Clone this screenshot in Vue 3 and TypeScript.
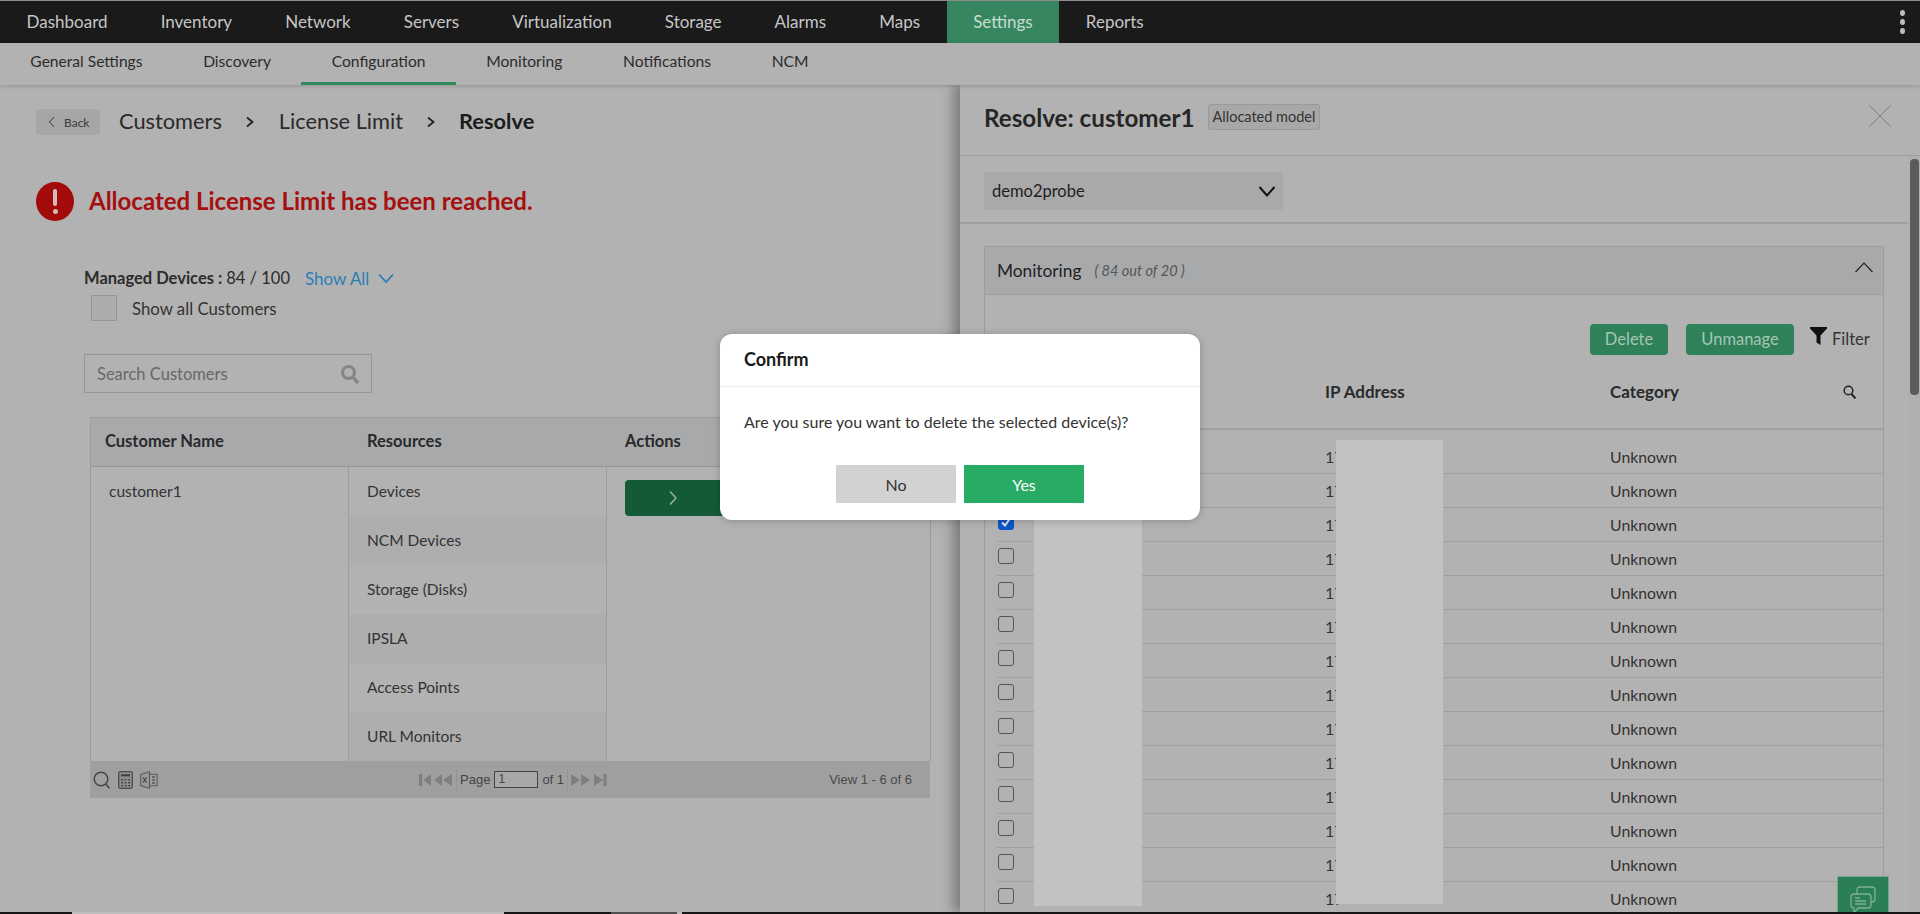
<script setup lang="ts">
const mainNav: string[] = ['Dashboard','Inventory','Network','Servers','Virtualization','Storage','Alarms','Maps','Settings','Reports']
const subNav: string[] = ['General Settings','Discovery','Configuration','Monitoring','Notifications','NCM']
const resources: string[] = ['Devices','NCM Devices','Storage (Disks)','IPSLA','Access Points','URL Monitors']
const rows: number[] = Array.from({ length: 14 }, (_, i) => i)
</script>

<template>
  <div class="page">
    <div class="top-strip"></div>
    <nav class="main-nav">
      <a v-for="n in mainNav" :key="n" class="main-item" :class="{ on: n === 'Settings' }">{{ n }}</a>
      <span class="kebab"><i></i><i></i><i></i></span>
    </nav>
    <nav class="sub-nav">
      <a v-for="n in subNav" :key="n" class="sub-item" :class="{ on: n === 'Configuration' }">{{ n }}</a>
    </nav>
    <div class="body">
      <section class="left">
        <div class="crumbs">
          <button class="back">
            <svg width="7" height="12" viewBox="0 0 7 12"><path d="M6 1 1.5 6 6 11" fill="none" stroke="#3a3a3a" stroke-width="1"/></svg>
            <span>Back</span>
          </button>
          <span class="crumb">Customers</span>
          <svg class="sep" width="10" height="12" viewBox="0 0 10 12"><path d="M2 1.5 7.5 6 2 10.5" fill="none" stroke="#222" stroke-width="1.8"/></svg>
          <span class="crumb">License Limit</span>
          <svg class="sep" width="10" height="12" viewBox="0 0 10 12"><path d="M2 1.5 7.5 6 2 10.5" fill="none" stroke="#222" stroke-width="1.8"/></svg>
          <span class="crumb current">Resolve</span>
        </div>
        <div class="alert">
          <span class="alert-icon"><i></i><b></b></span>
          <span class="alert-text">Allocated License Limit has been reached.</span>
        </div>
        <div class="managed">
          <span class="managed-label">Managed Devices :</span>
          <span class="managed-val">84 / 100</span>
          <a class="show-all">Show All</a>
          <svg width="16" height="11" viewBox="0 0 16 11"><path d="M1 1.5 8 9 15 1.5" fill="none" stroke="#2b7eb5" stroke-width="1.8"/></svg>
        </div>
        <label class="show-customers"><span class="big-check"></span><span>Show all Customers</span></label>
        <div class="search">
          <span>Search Customers</span>
          <svg width="20" height="20" viewBox="0 0 20 20"><circle cx="8.5" cy="8.5" r="6" fill="none" stroke="#858585" stroke-width="3"/><path d="M13 13l5 6" stroke="#858585" stroke-width="3.4"/></svg>
        </div>
        <div class="grid">
          <div class="grid-head">
            <div class="gh c1">Customer Name</div>
            <div class="gh c2">Resources</div>
            <div class="gh c3">Actions</div>
          </div>
          <div class="grid-body">
            <div class="c1 cust">customer1</div>
            <div class="c2 res-col">
              <div v-for="(r, i) in resources" :key="r" class="res" :class="{ alt: i % 2 === 1 }">{{ r }}</div>
            </div>
            <div class="c3 act-col">
              <button class="go">
                <svg width="10" height="16" viewBox="0 0 10 16"><path d="M2 1.5 8 8 2 14.5" fill="none" stroke="#9fb3a8" stroke-width="1.4"/></svg>
              </button>
            </div>
          </div>
        </div>
        <div class="pager">
          <div class="pager-tools">
            <svg width="18" height="18" viewBox="0 0 18 18"><circle cx="8" cy="8" r="6.8" fill="none" stroke="#474747" stroke-width="1.5"/><path d="M12.8 13l3.6 4.2" stroke="#474747" stroke-width="1.7"/></svg>
            <svg width="15" height="18" viewBox="0 0 15 18"><rect x=".7" y=".7" width="13.6" height="16.6" rx="1.5" fill="#8d8d8d" stroke="#4d4d4d" stroke-width="1.3"/><rect x="3" y="3.3" width="9" height="2" fill="#3f3f3f"/><path d="M3 8h2v1.6H3zM6.5 8h2v1.6h-2zM10 8h2v1.6h-2zM3 11h2v1.6H3zM6.5 11h2v1.6h-2zM10 11h2v1.6h-2zM3 14h2v1.6H3zM6.5 14h2v1.6h-2zM10 14h2v1.6h-2z" fill="#4a4a4a"/></svg>
            <svg width="18" height="18" viewBox="0 0 18 18"><path d="M.7 3.5 9.5.8v16.4L.7 14.5z" fill="#9a9a9a" stroke="#5a5a5a" stroke-width="1.1"/><path d="M9.5 3.3h7.6v11.4H9.5" fill="none" stroke="#5a5a5a" stroke-width="1.1"/><path d="M3 6.4l3.6 5.2M6.6 6.4 3 11.6" stroke="#4a4a4a" stroke-width="1.1"/><path d="M12 6h3M12 9h3M12 12h3" stroke="#5a5a5a" stroke-width="1.4"/></svg>
          </div>
          <div class="pager-center">
            <svg width="34" height="14" viewBox="0 0 34 14"><path d="M0 1h3v12H0zM4 7l8-6v12zM23 1v12l-8-6zM33 1v12l-9-6z" fill="#7f7f7f"/></svg>
            <span class="v-sep"></span>
            <span>Page</span>
            <span class="page-input">1</span>
            <span>of 1</span>
            <span class="v-sep"></span>
            <svg width="36" height="14" viewBox="0 0 36 14"><path d="M0 1v12l9-6zM10 1v12l9-6zM23 1v12l9-6zM32.500 1h3v12h-3z" fill="#7f7f7f"/></svg>
          </div>
          <div class="pager-view">View 1 - 6 of 6</div>
        </div>
      </section>

      <aside class="panel">
        <header class="panel-head">
          <h2>Resolve: customer1</h2>
          <span class="badge">Allocated model</span>
          <svg class="close" width="24" height="24" viewBox="0 0 24 24"><path d="M1 1l22 22M23 1 1 23" stroke="#7d7d7d" stroke-width="1"/></svg>
        </header>
        <div class="scroll-track"><div class="scroll-thumb"></div></div>
        <div class="probe-bar">
          <div class="probe">
            <span>demo2probe</span>
            <svg width="18" height="11" viewBox="0 0 18 11"><path d="M1.500 1 9 9.500 16.500 1" fill="none" stroke="#111" stroke-width="2"/></svg>
          </div>
        </div>
        <div class="accordion">
          <div class="acc-head">
            <span class="acc-title">Monitoring</span>
            <em>( 84 out of 20 )</em>
            <svg width="18" height="11" viewBox="0 0 18 11"><path d="M0.500 10 9 1l8.500 9" fill="none" stroke="#222" stroke-width="1.100"/></svg>
          </div>
          <div class="acc-body">
            <div class="toolbar">
              <button class="green del">Delete</button>
              <button class="green unm">Unmanage</button>
              <svg class="funnel" width="17" height="18" viewBox="0 0 17 18"><path d="M0 0h17v1.500L10.500 8.500V18L6.500 15.500V8.500L0 1.500z" fill="#111"/></svg>
              <span class="filter">Filter</span>
            </div>
            <div class="thead">
              <span class="th-ip">IP Address</span>
              <span class="th-cat">Category</span>
              <svg width="14" height="14" viewBox="0 0 14 14"><circle cx="5.500" cy="5.500" r="4.300" fill="none" stroke="#222" stroke-width="1.500"/><path d="M8.500 9l4 4.500" stroke="#222" stroke-width="1.900"/></svg>
            </div>
            <div v-for="i in rows" :key="i" class="tr" :class="{ first: i === 0 }">
              <span class="cb" :class="{ checked: i === 2 }">
                <svg v-if="i === 2" width="12" height="12" viewBox="0 0 12 12"><path d="M2 6.500 5 9.500 10 2.500" fill="none" stroke="#dfe6f2" stroke-width="2"/></svg>
              </span>
              <span class="td-ip">17</span>
              <span class="td-cat">Unknown</span>
            </div>
          </div>
        </div>
        <div class="mask mask-a"></div>
        <div class="mask mask-b"></div>
        <div class="chat">
          <svg width="28" height="32" viewBox="0 0 28 32"><path d="M8 14V5q0-3 3-3h12q3 0 3 3v9q0 3-3 3h-3" fill="none" stroke="#7fb096" stroke-width="1.300"/><path d="M5 9h14q3 0 3 3v8q0 3-3 3H9l-4 5v-5q-3 0-3-3v-8q0-3 3-3z" fill="#2a7f55" stroke="#7fb096" stroke-width="1.300"/><path d="M6 13h5M6 16h11M6 19h11" stroke="#7fb096" stroke-width="1.300"/></svg>
        </div>
      </aside>
    </div>
    <div class="taskbar">
      <span class="tb-a"></span><span class="tb-b"></span><span class="tb-c"></span><span class="tb-d"></span><span class="tb-e"></span>
    </div>
    <div class="dialog">
      <div class="dlg-title">Confirm</div>
      <div class="dlg-msg">Are you sure you want to delete the selected device(s)?</div>
      <div class="dlg-actions">
        <button class="no">No</button>
        <button class="yes">Yes</button>
      </div>
    </div>
  </div>
</template>

<style>
html, body { margin: 0; background: #b2b2b2; }
</style>

<style scoped>
.page { width: 1920px; height: 914px; overflow: hidden; display: flex; flex-direction: column; font-family: Lato, "Open Sans", sans-serif; background: #b2b2b2; color: #2a2a2a; position: relative; }
.top-strip { height: 1px; background: #8c8c8c; flex: none; }
.main-nav { height: 42px; flex: none; background: #1a1a1a; display: flex; align-items: stretch; position: relative; }
.main-item { font-size: 17px; color: #c6c6c6; padding: 0 26.550px; line-height: 42px; }
.main-item.on { background: #36875f; color: #c8dcd2; }
.kebab { position: absolute; right: 15px; top: 9px; display: flex; flex-direction: column; gap: 3px; }
.kebab i { width: 5px; height: 6px; border-radius: 50%; background: #bdbdbd; }
.sub-nav { height: 42px; flex: none; display: flex; position: relative; z-index: 2; background: #b2b2b2; box-shadow: 0 1px 4px rgba(0,0,0,.2); }
.sub-item { font-size: 15.600px; color: #2c2c2c; padding: 0 30.350px; line-height: 36px; height: 42px; box-sizing: border-box; }
.sub-item.on { border-bottom: 3px solid #2f8a5c; }
.body { flex: 1; display: flex; position: relative; min-height: 0; }
.left { width: 960px; flex: none; display: flex; flex-direction: column; }
.crumbs { margin: 24px 0 0 36px; height: 26px; display: flex; align-items: center; }
.back { width: 64px; height: 26px; border: 0; border-radius: 3px; background: #a6a6a6; display: flex; align-items: center; gap: 9px; padding: 0 0 0 12px; font: 12px Lato, sans-serif; color: #3a3a3a; }
.crumb { font-size: 21.800px; line-height: 26px; margin-top: -2px; color: #2a2a2a; margin-left: 19px; }
.crumb.current { font-weight: 700; color: #1c1c1c; margin-left: 18px; }
.sep { margin-left: 23px; margin-right: 5px; }
.alert { margin: 47px 0 0 36px; display: flex; align-items: center; gap: 15px; height: 39px; }
.alert-icon { width: 38px; height: 39px; border-radius: 50%; background: #a30a0a; display: flex; flex-direction: column; align-items: center; justify-content: center; gap: 3px; }
.alert-icon i { width: 4px; height: 17px; background: #d5bcbc; border-radius: 2px; }
.alert-icon b { width: 5px; height: 5px; background: #d5bcbc; border-radius: 50%; }
.alert-text { font-size: 24px; font-weight: 700; color: #a50f0f; margin-top: -2px; }
.managed { margin: 46px 0 0 84px; height: 22px; display: flex; align-items: center; font-size: 16.500px; }
.managed-label { font-weight: 700; color: #2c2c2c; }
.managed-val { margin-left: 4px; color: #2c2c2c; }
.show-all { margin-left: 15px; color: #2b7eb5; margin-right: 9px; font-size: 17px; }
.show-customers { margin: 6px 0 0 91px; height: 26px; display: flex; align-items: center; gap: 15px; font-size: 16.800px; color: #333; }
.big-check { width: 26px; height: 26px; box-sizing: border-box; background: #acacac; border: 1px solid #969696; }
.search { margin: 33px 0 0 84px; width: 288px; height: 39px; box-sizing: border-box; border: 1px solid #979797; display: flex; align-items: center; justify-content: space-between; padding: 0 11px 0 12px; font-size: 16.500px; color: #686868; }
.grid { margin: 24px 0 0 90px; width: 841px; height: 344px; box-sizing: border-box; border: 1px solid #9c9c9c; border-bottom: 0; display: flex; flex-direction: column; }
.grid-head { display: flex; height: 48px; flex: none; background: #a8a9ab; border-bottom: 1px solid #979797; }
.gh { font-weight: 700; font-size: 16.500px; line-height: 46px; color: #2a2a2a; box-sizing: border-box; }
.c1 { width: 258px; flex: none; }
.c2 { width: 258px; flex: none; }
.c3 { flex: 1; }
.gh.c1 { padding-left: 14px; }
.gh.c2 { padding-left: 18px; }
.gh.c3 { padding-left: 18px; }
.grid-body { flex: 1; display: flex; min-height: 0; }
.cust { padding: 15px 0 0 18px; box-sizing: border-box; font-size: 15.500px; color: #333; border-right: 1px solid #9e9e9e; }
.res-col { border-right: 1px solid #9e9e9e; box-sizing: border-box; overflow: hidden; }
.res { height: 49px; line-height: 48px; padding-left: 18px; font-size: 15.500px; color: #333; }
.res.alt { background: #aeaeae; }
.act-col { padding: 13px 0 0 18px; }
.go { width: 100px; height: 36px; border: 0; border-radius: 4px; background: #155a36; display: flex; align-items: center; justify-content: center; padding: 0 4px 0 0; }
.pager { margin-left: 90px; width: 840px; height: 37px; background: #9f9f9f; display: flex; align-items: center; color: #3f3f3f; position: relative; }
.pager-tools { display: flex; align-items: center; gap: 7px; padding-left: 3px; }
.pager-center { position: absolute; left: 329px; display: flex; align-items: center; gap: 2px; font: 13px "Liberation Sans", sans-serif; color: #444; }
.v-sep { width: 1px; height: 22px; background: #949494; margin: 0 1px; }
.page-input { width: 39px; height: 15px; border: 1px solid #444; background: #a8a8a8; font: 12px/15px "Liberation Sans", sans-serif; padding-left: 3px; margin: 0 2px; }
.pager-view { position: absolute; right: 18px; font: 13px "Liberation Sans", sans-serif; color: #4a4a4a; }
.panel { width: 960px; flex: none; position: relative; background: #b2b2b2; box-shadow: -7px 0 11px rgba(0,0,0,.3); }
.panel-head { height: 71px; box-sizing: border-box; border-bottom: 1px solid #9e9e9e; padding: 0 28px 6px 24px; display: flex; align-items: center; }
.panel-head h2 { margin: 0; font-size: 24.200px; font-weight: 700; color: #262626; }
.badge { margin-left: 13px; height: 26px; box-sizing: border-box; border: 1px solid #9a9a9a; border-radius: 3px; background: #a8a8a8; padding: 0 4px; font-size: 14.500px; line-height: 24px; color: #333; }
.close { margin-left: auto; margin-top: -2px; }
.scroll-track { position: absolute; right: 0; top: 71px; bottom: 0; width: 12px; background: #b0b0b0; }
.scroll-thumb { width: 9px; margin: 3px 0 0 2px; height: 236px; background: #5b5b5b; border-radius: 4px; }
.probe-bar { height: 68px; box-sizing: border-box; width: 948px; padding: 16px 0 0 24px; border-bottom: 2px solid #9e9e9e; }
.probe { width: 299px; height: 38px; box-sizing: border-box; background: #a9a9a9; border-radius: 3px; display: flex; align-items: center; justify-content: space-between; padding: 0 7px 0 8px; font-size: 16.500px; color: #1e1e1e; }
.accordion { margin: 22px 0 0 24px; width: 900px; box-sizing: border-box; border: 1px solid #9d9d9d; border-top: 0; }
.acc-head { height: 49px; background: #a8a9ab; border-top: 1px solid #9d9d9d; border-bottom: 1px solid #9d9d9d; box-sizing: border-box; display: flex; align-items: center; padding: 0 10px 0 12px; }
.acc-title { font-size: 17.300px; color: #222; }
.acc-head em { font-size: 14.500px; margin-left: 13px; color: #555; flex: 1; }
.acc-head svg { margin-top: -6px; }
.toolbar { height: 30px; margin-top: 29px; display: flex; align-items: center; padding-left: 605px; }
.green { height: 31px; border: 0; border-radius: 4px; background: #2f8159; color: #a5c6b4; font: 16.500px/28px Lato, sans-serif; padding: 0 0 1px; }
.del { width: 78px; }
.unm { width: 108px; margin-left: 18px; }
.funnel { margin-left: 16px; margin-top: -6px; }
.filter { margin-left: 5px; font-size: 16.500px; color: #333; }
.thead { height: 76px; box-sizing: border-box; border-bottom: 2px solid #a0a0a0; position: relative; font-size: 17px; font-weight: 700; }
.th-ip { position: absolute; left: 340px; top: 27px; color: #2a2a2a; }
.th-cat { position: absolute; left: 625px; top: 27px; color: #2a2a2a; }
.thead svg { position: absolute; left: 858px; top: 31px; }
.tr { height: 34px; margin-left: 12px; box-sizing: border-box; border-bottom: 1px solid #a0a0a0; display: flex; align-items: center; font-size: 15.800px; color: #333; position: relative; }
.tr.first { height: 44px; padding-top: 10px; }
.cb { width: 16px; height: 16px; box-sizing: border-box; border: 1.500px solid #555; border-radius: 3px; flex: none; margin: -5px 0 0 1px; display: flex; align-items: center; justify-content: center; }
.cb.checked { background: #0b57c9; border-color: #0b57c9; }
.td-ip { position: absolute; left: 328px; }
.td-cat { position: absolute; left: 613px; }
.mask { position: absolute; background: #c2c2c2; }
.mask-a { left: 74px; width: 108px; top: 355px; height: 466px; }
.mask-b { left: 376px; width: 107px; top: 355px; height: 464px; }
.chat { position: absolute; left: 877px; bottom: 0; width: 52px; height: 36px; background: #2a7f55; border: 1px solid #7aa68f; box-sizing: border-box; border-bottom: 0; display: flex; align-items: flex-start; justify-content: center; padding-top: 8px; overflow: hidden; }
.dialog { position: absolute; left: 720px; top: 334px; width: 480px; height: 186px; background: #fff; border-radius: 12px; box-shadow: 0 1px 8px rgba(0,0,0,.22); z-index: 5; color: #262626; }
.dlg-title { height: 53px; box-sizing: border-box; border-bottom: 1px solid #ededed; padding-left: 24px; line-height: 51px; font-size: 18px; font-weight: 700; color: #1a1a1a; }
.dlg-msg { padding: 25px 0 0 24px; font-size: 16px; line-height: 20px; color: #333; }
.dlg-actions { display: flex; gap: 8px; margin-top: 33px; padding-left: 116px; }
.no, .yes { width: 120px; height: 38px; border: 0; font: 16px Lato, sans-serif; padding: 0; }
.no { background: #d2d2d2; color: #333; }
.yes { background: #27ab65; color: #fff; }
.taskbar { height: 2px; flex: none; display: flex; background: #161616; position: relative; z-index: 3; }
.tb-a { width: 72px; } .tb-b { width: 432px; background: #bdbdbd; } .tb-c { width: 107px; } .tb-d { width: 66px; background: #505050; } .tb-e { width: 5px; background: #bbb; }
</style>
